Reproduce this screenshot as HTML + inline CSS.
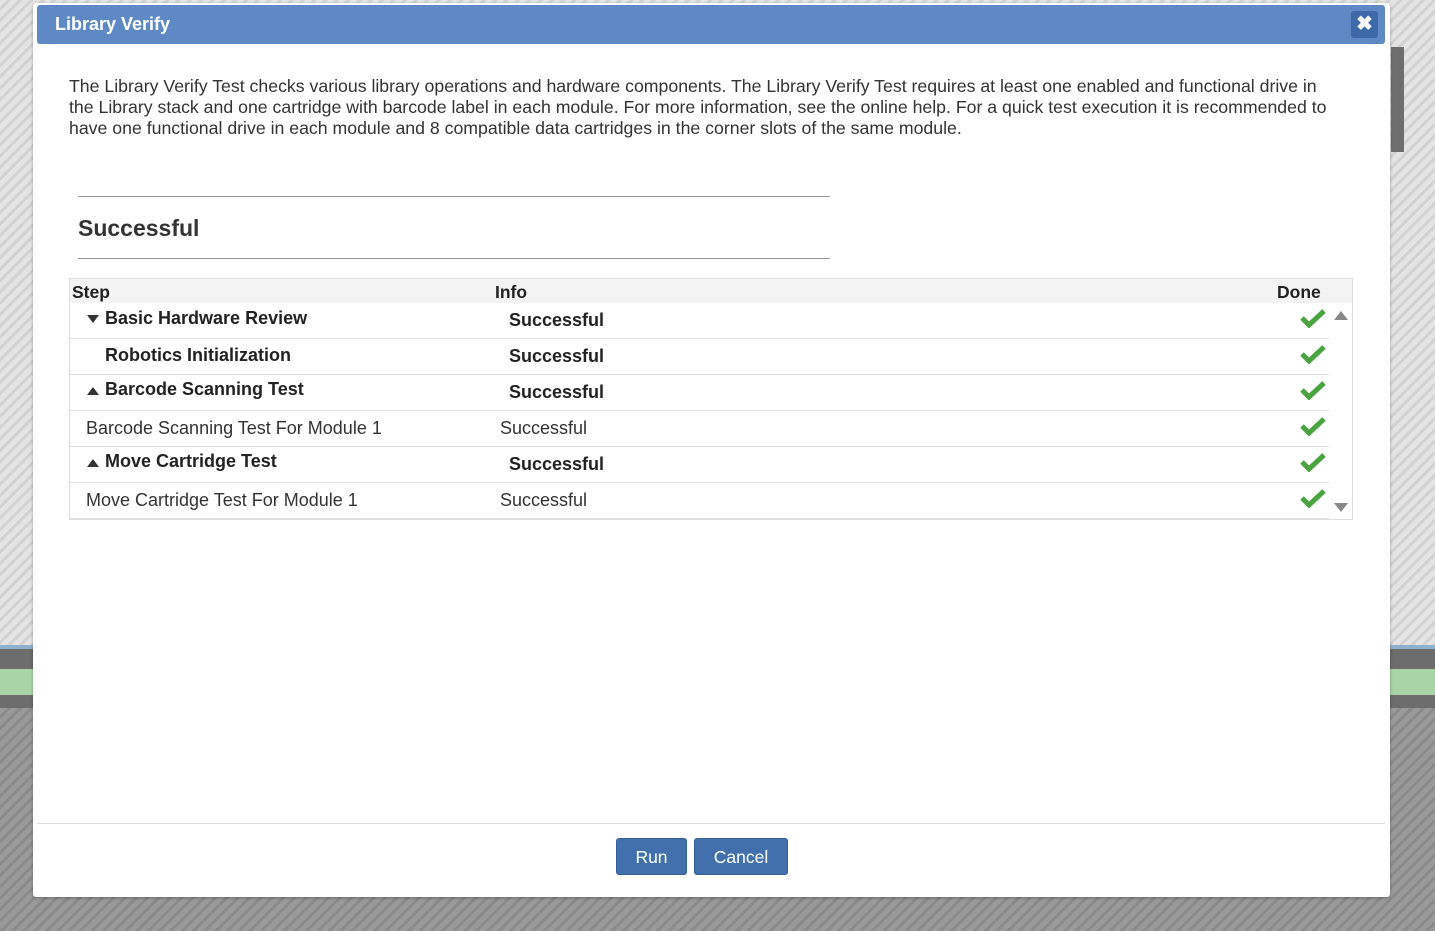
<!DOCTYPE html>
<html><head><style>
body{margin:0;width:1435px;height:931px;overflow:hidden;position:relative;font-family:"Liberation Sans",Arial,sans-serif;
background:repeating-linear-gradient(135deg,#e4e4e4 0 5px,#d2d2d2 5px 8px);}
.bot{position:absolute;left:0;top:708px;width:1435px;height:223px;background:repeating-linear-gradient(135deg,#9a9a9a 0 5px,#8a8a8a 5px 8px);}
.band{position:absolute;left:0;top:645px;width:1435px;height:63px;background:#6d6d6d;border-top:4px solid #8fb0cc;box-sizing:border-box}
.band i{position:absolute;left:0;right:0;top:20px;height:26px;background:#a9d4a8}
.sb{position:absolute;left:1391px;top:47px;width:13px;height:105px;background:#6e6e6e}
.dlg{position:absolute;left:33px;top:3px;width:1357px;height:894px;background:#fff;border-radius:3px;box-shadow:0 1px 3px rgba(0,0,0,.3)}
.hd{position:absolute;left:4px;top:2px;width:1348px;height:39px;background:#5f89c5;border-radius:3px;color:#fff;font-weight:bold;font-size:18px;line-height:39px;text-indent:18px}
.x{position:absolute;right:7px;top:6px;width:27px;height:27px;background:#3d69a9;border-radius:3px;color:#fff;text-align:center;line-height:27px;font-size:20px;text-indent:0}
.desc{position:absolute;left:36px;top:73px;width:1285px;font-size:17.7px;line-height:21px;color:#333}
.hr{position:absolute;left:45px;width:752px;height:1px;background:#999}
.succ{position:absolute;left:45px;top:212px;font-size:23px;font-weight:bold;color:#333}
.tbl{position:absolute;left:36px;top:275px;width:1282px;height:240px;border:1px solid #ddd}
.th{position:absolute;top:0;height:24px;width:100%;background:#f3f3f3;font-weight:bold;font-size:17.5px;color:#222}
.th span{position:absolute;top:3px}
.row{position:absolute;left:0;width:1259px;height:35px;border-bottom:1px solid #ddd;font-size:18px;color:#333}
.row span{position:absolute;top:9px}
.b{font-weight:bold;color:#222}
.ck{position:absolute;left:1230px;top:5px}
.tri{position:absolute;left:17px;top:14px;width:0;height:0;border-left:6px solid transparent;border-right:6px solid transparent}
.ft{position:absolute;left:4px;top:820px;width:1348px;height:1px;background:#ddd}
.btn{position:absolute;top:835px;height:37px;background:#4270ad;border-radius:3px;color:#fff;font-size:17.5px;line-height:37px;text-align:center;border:1px solid #345e96;box-sizing:border-box}
</style></head><body>
<div class="band"><i></i></div><div class="bot"></div><div class="sb"></div>
<div class="dlg">
<div class="hd">Library Verify<div class="x">✖</div></div>
<div class="desc">The Library Verify Test checks various library operations and hardware components. The Library Verify Test requires at least one enabled and functional drive in<br>the Library stack and one cartridge with barcode label in each module. For more information, see the online help. For a quick test execution it is recommended to<br>have one functional drive in each module and 8 compatible data cartridges in the corner slots of the same module.</div>
<div class="hr" style="top:193px"></div>
<div class="succ">Successful</div>
<div class="hr" style="top:255px"></div>
<div class="tbl">
<div class="th"><span style="left:2px">Step</span><span style="left:425px">Info</span><span style="left:1207px">Done</span></div>
<svg style="position:absolute;left:1264px;top:31px" width="14" height="10"><path d="M0 10L7 1L14 10Z" fill="#888"/></svg>
<svg style="position:absolute;left:1264px;top:224px" width="14" height="10"><path d="M0 0L7 9L14 0Z" fill="#888"/></svg>
<div class="row" style="top:24px"><div class="tri" style="border-top:8px solid #333;top:12px"></div><span class="b" style="left:35px;top:5px">Basic Hardware Review</span><span class="b" style="left:439px;top:7px">Successful</span><svg class="ck" width="26" height="20"><path d="M2 10L9 17L24 3" stroke="#4aa340" stroke-width="5" fill="none"/></svg></div>
<div class="row" style="top:60px"><span class="b" style="left:35px;top:6px">Robotics Initialization</span><span class="b" style="left:439px;top:7px">Successful</span><svg class="ck" width="26" height="20"><path d="M2 10L9 17L24 3" stroke="#4aa340" stroke-width="5" fill="none"/></svg></div>
<div class="row" style="top:96px"><div class="tri" style="border-bottom:8px solid #333;top:12px"></div><span class="b" style="left:35px;top:4px">Barcode Scanning Test</span><span class="b" style="left:439px;top:7px">Successful</span><svg class="ck" width="26" height="20"><path d="M2 10L9 17L24 3" stroke="#4aa340" stroke-width="5" fill="none"/></svg></div>
<div class="row" style="top:132px"><span style="left:16px;top:7px">Barcode Scanning Test For Module 1</span><span style="left:430px;top:7px">Successful</span><svg class="ck" width="26" height="20"><path d="M2 10L9 17L24 3" stroke="#4aa340" stroke-width="5" fill="none"/></svg></div>
<div class="row" style="top:168px"><div class="tri" style="border-bottom:8px solid #333;top:12px"></div><span class="b" style="left:35px;top:4px">Move Cartridge Test</span><span class="b" style="left:439px;top:7px">Successful</span><svg class="ck" width="26" height="20"><path d="M2 10L9 17L24 3" stroke="#4aa340" stroke-width="5" fill="none"/></svg></div>
<div class="row" style="top:204px"><span style="left:16px;top:7px">Move Cartridge Test For Module 1</span><span style="left:430px;top:7px">Successful</span><svg class="ck" width="26" height="20"><path d="M2 10L9 17L24 3" stroke="#4aa340" stroke-width="5" fill="none"/></svg></div>
</div>
<div class="ft"></div>
<div class="btn" style="left:583px;width:71px">Run</div>
<div class="btn" style="left:661px;width:94px">Cancel</div>
</div>
</body></html>
